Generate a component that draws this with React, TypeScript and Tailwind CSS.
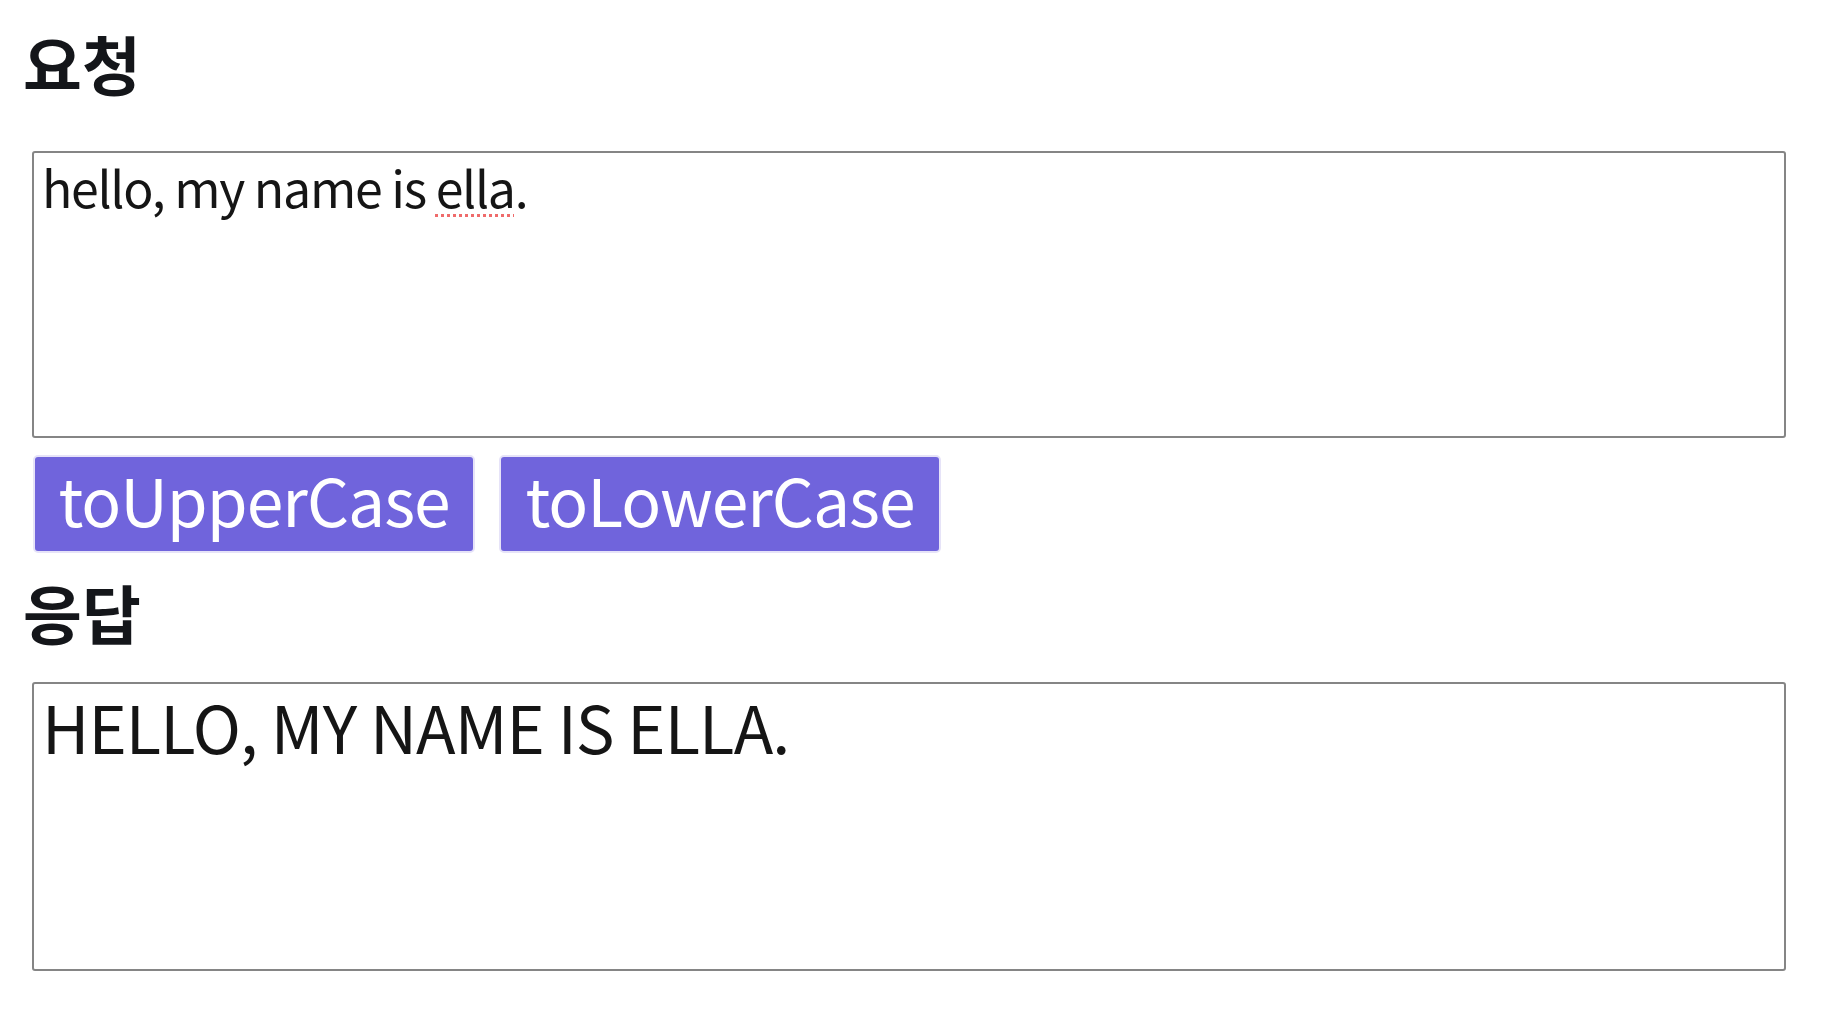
import { useState } from "react";

const FONT = "font-['Noto_Sans_CJK_KR','Noto_Sans',sans-serif]";

const App = () => {
  const [text] = useState("hello, my name is ella.");
  const [result, setResult] = useState("HELLO, MY NAME IS ELLA.");

  return (
    <div className={`min-h-screen bg-white px-[23px] pt-[17px] text-[#14161a] ${FONT}`}>
      <h1 className="text-[64px] font-bold leading-[90px]">요청</h1>
      <div
        role="textbox"
        className="mt-[44px] ml-[9px] h-[287px] w-[1754px] rounded-[3px] border-2 border-[#858585] px-[8px] pt-[1px] text-[50px] leading-[64px] tracking-[-1.3px] text-[#151515]"
      >
        hello, my name is{" "}
        <span className="underline decoration-dotted decoration-[#ef6b6b] decoration-[3px] underline-offset-[6px]">
          ella
        </span>
        .
      </div>
      <div className="mt-[17px] ml-[10px] flex gap-[24px]">
        <button
          onClick={() => setResult(text.toUpperCase())}
          className="h-[98px] w-[442px] rounded-[5px] border-2 border-[#e6e3f8] bg-[#7064dc] pb-[12px] text-[66px] leading-none tracking-[-1px] text-white"
        >
          toUpperCase
        </button>
        <button
          onClick={() => setResult(text.toLowerCase())}
          className="h-[98px] w-[442px] rounded-[5px] border-2 border-[#e6e3f8] bg-[#7064dc] pb-[12px] text-[66px] leading-none tracking-[-1px] text-white"
        >
          toLowerCase
        </button>
      </div>
      <h2 className="mt-[13px] text-[64px] font-bold leading-[90px]">응답</h2>
      <div
        role="textbox"
        className="mt-[26px] ml-[9px] h-[289px] w-[1754px] rounded-[3px] border-2 border-[#858585] px-[8px] pt-[2px] text-[65px] leading-[80px] tracking-[-0.9px] text-[#151515]"
      >
        {result}
      </div>
    </div>
  );
};

export default App;
